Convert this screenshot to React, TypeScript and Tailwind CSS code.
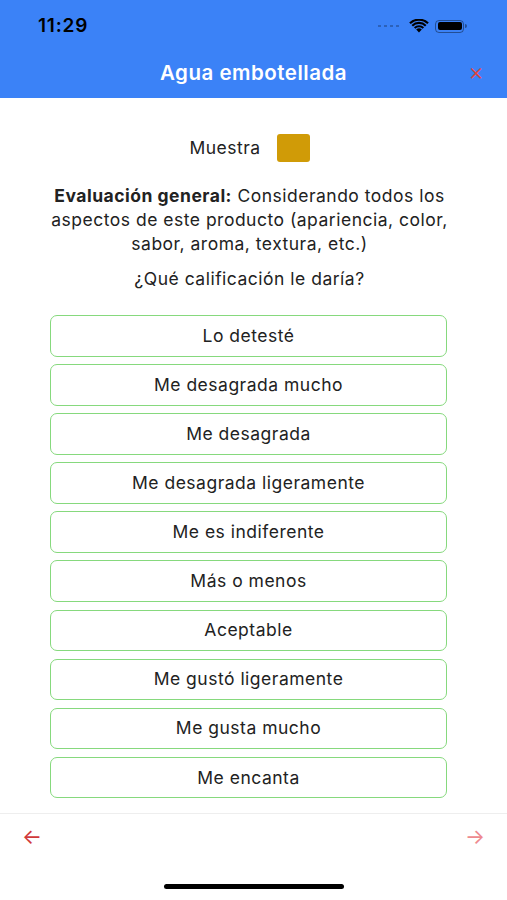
import React from "react";

const opciones = [
  "Lo detesté",
  "Me desagrada mucho",
  "Me desagrada",
  "Me desagrada ligeramente",
  "Me es indiferente",
  "Más o menos",
  "Aceptable",
  "Me gustó ligeramente",
  "Me gusta mucho",
  "Me encanta",
];

function Wifi() {
  return (
    <svg width="20" height="14" viewBox="0 0 20 14">
      <path d="M10 13.5 L7.2 10.6 A4 4 0 0 1 12.8 10.6 Z" fill="#000" />
      <path d="M4.9 8.3 A7.3 7.3 0 0 1 15.1 8.3 L13.6 9.8 A5.2 5.2 0 0 0 6.4 9.8 Z" fill="#000" />
      <path d="M2.5 5.9 A10.7 10.7 0 0 1 17.5 5.9 L16 7.4 A8.6 8.6 0 0 0 4 7.4 Z" fill="#000" />
      <path d="M0.2 3.6 A14 14 0 0 1 19.8 3.6 L18.3 5.1 A11.9 11.9 0 0 0 1.7 5.1 Z" fill="#000" />
    </svg>
  );
}

function Battery() {
  return (
    <div className="flex items-center">
      <div className="w-[29px] h-[13px] rounded-[4px] border border-black/40 p-[1.5px]">
        <div className="w-full h-full rounded-[2px] bg-black" />
      </div>
      <div className="w-[2px] h-[4px] rounded-r-sm bg-black/40 ml-[1px]" />
    </div>
  );
}

export default function App() {
  return (
    <div
      className="w-[507px] h-[900px] bg-white flex flex-col text-[#222]"
      style={{ fontFamily: "Inter, 'Liberation Sans', sans-serif" }}
    >
      {/* Header */}
      <div className="bg-[#3b82f7] h-[98px] flex flex-col shrink-0">
        <div className="h-[52px] flex items-center justify-between pl-[38px] pr-[40px]">
          <span className="text-[19px] font-semibold text-black tracking-[0.8px]">11:29</span>
          <div className="flex items-center gap-[6px]">
            <div className="flex gap-[3px] mr-[4px]">
              <span className="w-[3px] h-[2px] bg-black/25" />
              <span className="w-[3px] h-[2px] bg-black/25" />
              <span className="w-[3px] h-[2px] bg-black/25" />
              <span className="w-[3px] h-[2px] bg-black/25" />
            </div>
            <Wifi />
            <Battery />
          </div>
        </div>
        <div className="flex-1 relative flex items-center justify-center pb-[4px]">
          <span className="text-white text-[20.5px] font-semibold tracking-[0.5px]">Agua embotellada</span>
          <span className="absolute right-[23px] top-[8px] text-[#e0463d] text-[24px] font-light leading-none">
            ×
          </span>
        </div>
      </div>

      {/* Body */}
      <div className="flex-1 flex flex-col items-center pt-[36px] text-[17.5px] tracking-[0.5px]">
        <div className="flex items-center gap-[16px] pr-[8px]">
          <span>Muestra</span>
          <div className="w-[33px] h-[28px] rounded-[3px] bg-[#d09b07]" />
        </div>
        <p className="mt-[22px] px-[50px] mr-[8px] text-center leading-[24px]">
          <span className="font-bold">Evaluación general:</span> Considerando todos los aspectos de
          este producto (apariencia, color, sabor, aroma, textura, etc.)
        </p>
        <p className="mt-[11px] mr-[8px] leading-[24px]">¿Qué calificación le daría?</p>

        <div className="mt-[24px] w-[397px] self-start ml-[50px] flex flex-col gap-[7.5px]">
          {opciones.map((o) => (
            <div
              key={o}
              className="h-[41.6px] rounded-[7px] border-[1.5px] border-[#86d97d] flex items-center justify-center"
            >
              {o}
            </div>
          ))}
        </div>
      </div>

      {/* Footer */}
      <div className="h-[87px] border-t border-[#eeeeee] shrink-0 flex flex-col">
        <div className="flex justify-between items-center px-[22px] pt-[7px]">
          <span className="text-[#d0393a] text-[21px]">←</span>
          <span className="text-[#ee8a8e] text-[21px]">→</span>
        </div>
        <div className="flex-1 flex items-end justify-center pb-[11px]">
          <div className="w-[180px] h-[5px] rounded-full bg-black" />
        </div>
      </div>
    </div>
  );
}
